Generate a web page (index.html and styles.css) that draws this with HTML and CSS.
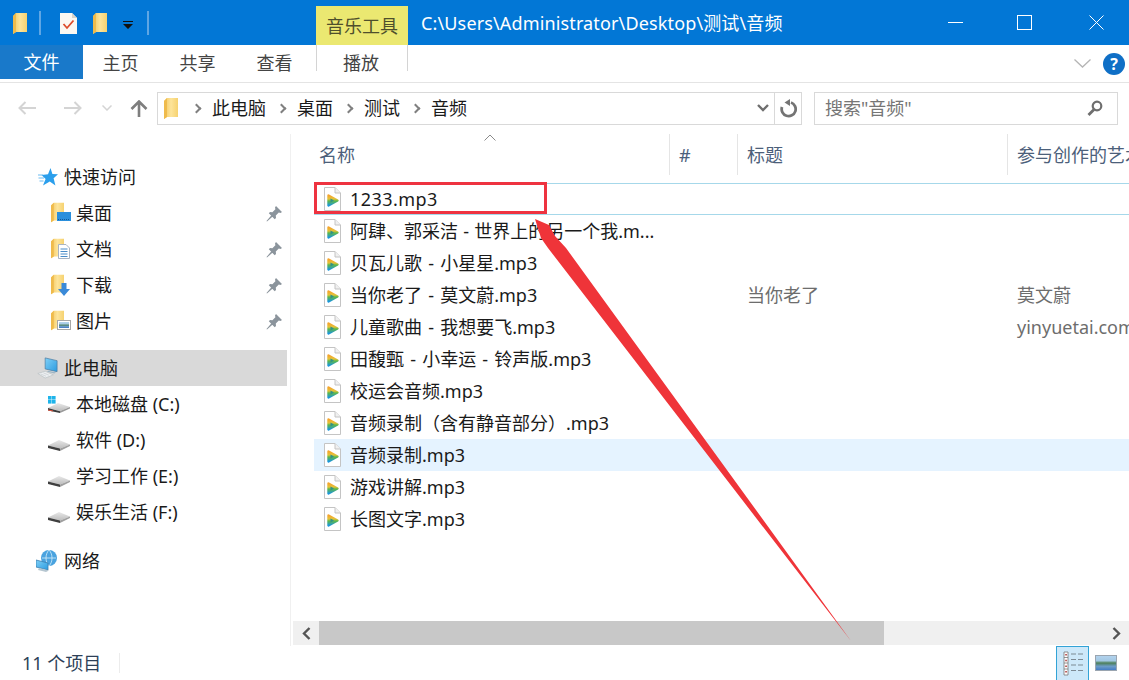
FILE: index.html
```html
<!DOCTYPE html>
<html lang="zh-CN">
<head>
<meta charset="utf-8">
<title>音频</title>
<link rel="stylesheet" href="styles.css">
</head>
<body>
<svg class="sprite" aria-hidden="true">
  <defs>
    <linearGradient id="fold" x1="0" y1="0" x2="1" y2="0"><stop offset="0" stop-color="#f3c65c"/><stop offset=".5" stop-color="#fde49a"/><stop offset="1" stop-color="#f6d270"/></linearGradient>
    <linearGradient id="scr" x1="0" y1="0" x2="1" y2="1"><stop offset="0" stop-color="#7fd0f7"/><stop offset="1" stop-color="#2b9be0"/></linearGradient>
    <linearGradient id="drv" x1="0" y1="0" x2="0" y2="1"><stop offset="0" stop-color="#e8e8e8"/><stop offset="1" stop-color="#bdbdbd"/></linearGradient>
    <linearGradient id="pic" x1="0" y1="0" x2="0" y2="1"><stop offset="0" stop-color="#b4d4ee"/><stop offset=".35" stop-color="#a3c8e4"/><stop offset=".5" stop-color="#4d7f58"/><stop offset=".72" stop-color="#6d9cc8"/><stop offset="1" stop-color="#3f78c4"/></linearGradient>
    <linearGradient id="play" x1="0" y1="0" x2="0" y2="1"><stop offset="0" stop-color="#f5a52c"/><stop offset=".35" stop-color="#e3c23a"/><stop offset=".55" stop-color="#5cb84a"/><stop offset="1" stop-color="#1b96dc"/></linearGradient>
    <symbol id="i-folder" viewBox="0 0 14 21"><path d="M0 3 L0 21 L3 19 L14 19 L14 0 L3 0 Z" fill="url(#fold)"/><path d="M0 3 L3 0 L3 19 L0 21 Z" fill="#efbb4c"/></symbol>
    <symbol id="i-music" viewBox="0 0 19 24"><path d="M1.5 .5 H12 L17.5 6 V23.5 H1.5 Z" fill="#fff" stroke="#c4c4c4"/><path d="M12 .5 V6 H17.5" fill="#f0f0f0" stroke="#c4c4c4"/><path d="M5.5 8.5 L14.5 13.5 L5.5 18.5 Z" fill="url(#play)" stroke="url(#play)" stroke-width="2.4" stroke-linejoin="round"/><path d="M7.5 11.5 L11 13.5 L7.5 15.5 Z" fill="#2f8f8a"/></symbol>
    <symbol id="i-pin" viewBox="0 0 17 17"><path d="M10 1 L16 7 L14.5 8 L12.8 7.6 L9.8 10.6 L10 13 L8.7 14.2 L2.8 8.3 L4 7 L6.4 7.2 L9.4 4.2 L9 2.5 Z M5.2 10.6 L6.4 11.8 L1 16.5 L.5 16 Z" fill="#8b949c"/></symbol>
    <symbol id="i-star" viewBox="0 0 20 18"><path d="M12.5 0 L14.4 6 L20 6.3 L15.6 10.2 L17.4 17.5 L11.8 13.6 L5 17.5 L7.6 11 L3.5 7 L10 6.3 Z" fill="#2b9fec"/><path d="M0 7 H5 M0.5 10 H6 M1.5 13 H5.5" stroke="#6bbcf2" stroke-width="1.2"/></symbol>
    <symbol id="i-pc" viewBox="0 0 24 24"><path d="M10 1 L23 4 V16 L10 13 Z" fill="url(#scr)" stroke="#4d7da3" stroke-width=".8"/><path d="M13 15 L22 17 L20 18 L12 16 Z" fill="#9db4c4"/><path d="M2 18 L10 15.5 L19 19.5 L10 23 Z" fill="#eceff1" stroke="#bcc2c6" stroke-width=".8"/><path d="M5 18.5 L11 21 M8 17.3 L14 19.8" stroke="#c8ced2" stroke-width=".8"/></symbol>
    <symbol id="i-cdrive" viewBox="0 0 24 17"><rect x="1" y="0" width="3.6" height="3.6" fill="#1eb4ea"/><rect x="5" y="0" width="3.6" height="3.6" fill="#1eb4ea"/><rect x="1" y="4" width="3.6" height="3.6" fill="#1eb4ea"/><rect x="5" y="4" width="3.6" height="3.6" fill="#1eb4ea"/><path d="M1 12 L11 7 L23 11 L13 15 Z" fill="url(#drv)"/><path d="M1 12 L13 15.2 L13 17 L1 14.5 Z" fill="#3b3b3b"/><path d="M13 15 L23 11 V12.5 L13 17 Z" fill="#9a9a9a"/><path d="M1 14 L6 15" stroke="#e0533d"/></symbol>
    <symbol id="i-drive" viewBox="0 0 24 13"><path d="M1 7.5 L12 2 L23 6.5 L13 10.5 Z" fill="url(#drv)"/><path d="M1 7.5 L13 10.5 L13 13 L1 10 Z" fill="#3f3f3f"/><path d="M13 10.5 L23 6.5 V8 L13 13 Z" fill="#a0a0a0"/></symbol>
    <symbol id="i-net" viewBox="0 0 22 22"><circle cx="13" cy="8" r="8" fill="#4aa3df"/><path d="M6 8 H20 M13 0 C9 4 9 12 13 16 C17 12 17 4 13 0" stroke="#d6edfa" fill="none" stroke-width=".8"/><path d="M0 10 L12 13 V20 L0 17 Z" fill="url(#scr)" stroke="#3a7fb0" stroke-width=".8"/><path d="M3 18 L13 20.5 L10 22 L2 20 Z" fill="#b6c6d0"/></symbol>
  </defs>
</svg>

<div class="window">
  <header class="titlebar">
    <div class="qat">
      <svg class="qf qf-first"><use href="#i-folder"/></svg>
      <span class="qsep"></span>
      <svg class="qdoc" viewBox="0 0 17 21"><path d="M0 0 H12 L17 5 V21 H0 Z" fill="#fbf8f2"/><path d="M12 0 L17 5 H12 Z" fill="#d8d4ca"/><path d="M3.5 11 L7 15 L13.5 7.5" fill="none" stroke="#dd4b2b" stroke-width="1.8"/></svg>
      <svg class="qf qf-second"><use href="#i-folder"/></svg>
      <svg class="qdrop" viewBox="0 0 10 9"><path d="M0 0 H10 V1 H0 Z M0 3 H10 L5 8 Z" fill="#111"/></svg>
      <span class="qsep qsep-last"></span>
    </div>
    <div class="tooltab">音乐工具</div>
    <div class="wintitle">C:\Users\Administrator\Desktop\测试\音频</div>
    <div class="winctl">
      <svg class="ctl" viewBox="0 0 15 15"><path d="M0 7.5 H15" stroke="#fff"/></svg>
      <svg class="ctl" viewBox="0 0 15 15"><rect x=".5" y=".5" width="14" height="14" fill="none" stroke="#fff"/></svg>
      <svg class="ctl ctl-close" viewBox="0 0 15 15"><path d="M.5 .5 L14.5 14.5 M14.5 .5 L.5 14.5" stroke="#fff"/></svg>
    </div>
  </header>

  <nav class="ribbon">
    <div class="tab-file">文件</div>
    <div class="tab">主页</div>
    <div class="tab">共享</div>
    <div class="tab">查看</div>
    <div class="tab-tool">播放</div>
    <div class="ribbon-right">
      <svg class="rib-chev" viewBox="0 0 17 9"><path d="M.5 .5 L8.5 8 L16.5 .5" fill="none" stroke="#b5b5b5" stroke-width="1.3"/></svg>
      <span class="help">?</span>
    </div>
  </nav>

  <div class="addressbar">
    <svg class="nav-arrow nav-back" viewBox="0 0 18 14"><path d="M18 7 H2 M7.5 1 L1.5 7 L7.5 13" fill="none" stroke="#d4d4d4" stroke-width="2"/></svg>
    <svg class="nav-arrow nav-fwd" viewBox="0 0 18 14"><path d="M0 7 H16 M10.5 1 L16.5 7 L10.5 13" fill="none" stroke="#d4d4d4" stroke-width="2"/></svg>
    <svg class="nav-down" viewBox="0 0 10 6"><path d="M.5 .5 L5 5 L9.5 .5" fill="none" stroke="#d4d4d4" stroke-width="1.5"/></svg>
    <svg class="nav-up" viewBox="0 0 18 17"><path d="M9 17 V2 M1.5 9 L9 1.5 L16.5 9" fill="none" stroke="#7e7e7e" stroke-width="2.6"/></svg>
    <div class="pathbox">
      <svg class="path-folder"><use href="#i-folder"/></svg>
      <span class="crumb-sep"></span><span>此电脑</span>
      <span class="crumb-sep"></span><span>桌面</span>
      <span class="crumb-sep"></span><span>测试</span>
      <span class="crumb-sep"></span><span>音频</span>
      <svg class="path-chev" viewBox="0 0 12 8"><path d="M1 1 L6 6 L11 1" fill="none" stroke="#6e6e6e" stroke-width="2.4"/></svg>
      <span class="path-refresh"><svg viewBox="0 0 18 19"><path d="M12 3.5 A7 7 0 1 1 3 8" fill="none" stroke="#747474" stroke-width="2.8"/><path d="M11 0 L11 7 L5.5 3.5 Z" fill="#747474"/></svg></span>
    </div>
    <div class="searchbox">
      <span>搜索"音频"</span>
      <svg class="search-ico" viewBox="0 0 16 16"><circle cx="10" cy="6" r="4.3" fill="none" stroke="#6e6e6e" stroke-width="2.2"/><path d="M7 9.5 L1.5 15" stroke="#6e6e6e" stroke-width="2.8"/></svg>
    </div>
  </div>

  <main class="content">
    <aside class="sidebar">
      <div class="nrow nrow-top"><svg class="ico-top ico-star"><use href="#i-star"/></svg>快速访问</div>
      <div class="nrow nrow-sub">
        <span class="subfolder"><svg class="sf-base"><use href="#i-folder"/></svg><svg class="sf-over" viewBox="0 0 14 9"><rect width="14" height="9" fill="#2a8fdc"/><path d="M1 7.5 H13" stroke="#0f5a9c" stroke-dasharray="1 1"/></svg></span>桌面<svg class="pin"><use href="#i-pin"/></svg>
      </div>
      <div class="nrow nrow-sub">
        <span class="subfolder"><svg class="sf-base"><use href="#i-folder"/></svg><svg class="sf-over sf-doc" viewBox="0 0 12 15"><path d="M.5 .5 H8 L11.5 4 V14.5 H.5 Z" fill="#fff" stroke="#a9b4c2"/><path d="M2.5 5 H9.5 M2.5 7.5 H9.5 M2.5 10 H9.5 M2.5 12.5 H9.5" stroke="#4a8cc8"/></svg></span>文档<svg class="pin"><use href="#i-pin"/></svg>
      </div>
      <div class="nrow nrow-sub">
        <span class="subfolder"><svg class="sf-base"><use href="#i-folder"/></svg><svg class="sf-over sf-dl" viewBox="0 0 12 13"><path d="M3.5 0 H8.5 V6 H12 L6 13 L0 6 H3.5 Z" fill="#3a8ad8"/></svg></span>下载<svg class="pin"><use href="#i-pin"/></svg>
      </div>
      <div class="nrow nrow-sub">
        <span class="subfolder"><svg class="sf-base"><use href="#i-folder"/></svg><svg class="sf-over sf-pic" viewBox="0 0 14 10"><rect x=".5" y=".5" width="13" height="9" fill="#fff" stroke="#a7a7a7"/><rect x="2" y="2" width="10" height="6" fill="url(#pic)"/></svg></span>图片<svg class="pin"><use href="#i-pin"/></svg>
      </div>

      <div class="nrow nrow-top nrow-pc"><svg class="ico-top ico-pc"><use href="#i-pc"/></svg>此电脑</div>
      <div class="nrow nrow-sub"><svg class="ico-cdrive"><use href="#i-cdrive"/></svg>本地磁盘 (C:)</div>
      <div class="nrow nrow-sub"><svg class="ico-drive"><use href="#i-drive"/></svg>软件 (D:)</div>
      <div class="nrow nrow-sub"><svg class="ico-drive"><use href="#i-drive"/></svg>学习工作 (E:)</div>
      <div class="nrow nrow-sub"><svg class="ico-drive"><use href="#i-drive"/></svg>娱乐生活 (F:)</div>

      <div class="nrow nrow-top nrow-net"><svg class="ico-top ico-net"><use href="#i-net"/></svg>网络</div>
    </aside>

    <section class="pane">
      <div class="listview">
        <div class="colhead">
          <span class="sort-chev"><svg viewBox="0 0 12 7"><path d="M.5 6.5 L6 1 L11.5 6.5" fill="none" stroke="#8a8a8a"/></svg></span>
          <div class="col col-name">名称</div>
          <div class="col">#</div>
          <div class="col">标题</div>
          <div class="col col-last">参与创作的艺术家</div>
        </div>
        <div class="frow frow-focus"><div class="fname fname-latin"><svg class="mico"><use href="#i-music"/></svg>1233.mp3</div></div>
        <div class="frow"><div class="fname fname-long"><svg class="mico"><use href="#i-music"/></svg>阿肆、郭采洁 - 世界上的另一个我.m...</div></div>
        <div class="frow"><div class="fname"><svg class="mico"><use href="#i-music"/></svg>贝瓦儿歌 - 小星星.mp3</div></div>
        <div class="frow"><div class="fname"><svg class="mico"><use href="#i-music"/></svg>当你老了 - 莫文蔚.mp3</div><div></div><div class="fmeta">当你老了</div><div class="fmeta">莫文蔚</div></div>
        <div class="frow"><div class="fname"><svg class="mico"><use href="#i-music"/></svg>儿童歌曲 - 我想要飞.mp3</div><div></div><div></div><div class="fmeta">yinyuetai.com</div></div>
        <div class="frow"><div class="fname"><svg class="mico"><use href="#i-music"/></svg>田馥甄 - 小幸运 - 铃声版.mp3</div></div>
        <div class="frow"><div class="fname"><svg class="mico"><use href="#i-music"/></svg>校运会音频.mp3</div></div>
        <div class="frow"><div class="fname"><svg class="mico"><use href="#i-music"/></svg>音频录制（含有静音部分）.mp3</div></div>
        <div class="frow frow-hover"><div class="fname"><svg class="mico"><use href="#i-music"/></svg>音频录制.mp3</div></div>
        <div class="frow"><div class="fname"><svg class="mico"><use href="#i-music"/></svg>游戏讲解.mp3</div></div>
        <div class="frow"><div class="fname"><svg class="mico"><use href="#i-music"/></svg>长图文字.mp3</div></div>
      </div>
      <div class="hscroll">
        <span class="sbtn"><svg viewBox="0 0 9 13"><path d="M7.5 1 L2 6.5 L7.5 12" fill="none" stroke="#555" stroke-width="2.4"/></svg></span>
        <span class="sthumb"></span>
        <span class="strack"></span>
        <span class="sbtn"><svg viewBox="0 0 9 13"><path d="M1.5 1 L7 6.5 L1.5 12" fill="none" stroke="#555" stroke-width="2.4"/></svg></span>
      </div>
    </section>
  </main>

  <footer class="statusbar">
    <span class="count">11 个项目</span>
    <span class="stsep"></span>
    <span class="viewbtn viewbtn-on"><svg viewBox="0 0 23 25"><path d="M3 1 H7 V24 H3 Z" fill="#fff" stroke="#777" stroke-width=".8"/><path d="M3 6.5 H7 M3 12 H7 M3 18 H7" stroke="#777" stroke-width=".8"/><path d="M4.3 3 h1.5 v1.5 h-1.5 Z M4.3 8.7 h1.5 v1.5 h-1.5 Z M4.3 14.4 h1.5 v1.5 h-1.5 Z M4.3 20 h1.5 v1.5 h-1.5 Z" fill="#a33"/><path d="M10 3 H15 M17 3 H22 M10 8.5 H15 M17 8.5 H22 M10 14 H15 M17 14 H22 M10 19.5 H15 M17 19.5 H22" stroke="#7d8a94" stroke-width="1.2"/></svg></span>
    <span class="viewbtn"><svg viewBox="0 0 22 16"><rect x=".5" y=".5" width="21" height="15" fill="url(#pic)" stroke="#9aa5b0"/></svg></span>
  </footer>

  <div class="redbox"></div>
  <svg class="redarrow" viewBox="0 0 1129 680"><polygon points="535,219 549,225 555,236 566,248 851,641 548,248 541,238" fill="#ef3439"/></svg>
</div>
</body>
</html>
```
FILE: styles.css
```css
* { box-sizing: border-box; }
html, body { margin: 0; height: 100%; overflow: hidden; background: #fff; }
body { font-family: "Noto Sans", "Noto Sans CJK SC", sans-serif; font-size: 18px; color: #1a1a1a; }
.sprite { position: absolute; width: 0; height: 0; }
.window { position: relative; width: 1129px; height: 680px; display: flex; flex-direction: column; overflow: hidden; }

/* title bar */
.titlebar { height: 45px; flex: none; background: #0277d6; display: flex; align-items: flex-start; color: #fff; }
.qat { width: 316px; height: 45px; flex: none; display: flex; align-items: center; padding-left: 13px; }
.qf { width: 14px; height: 21px; }
.qf-first { margin-top: 1px; }
.qf-second { margin-left: 16px; margin-top: 1px; }
.qsep { width: 2px; height: 24px; background: #5fa6e4; margin-left: 12px; }
.qdoc { width: 17px; height: 21px; margin-left: 19px; margin-top: 1px; }
.qdrop { width: 10px; height: 9px; margin-left: 16px; margin-top: 6px; }
.qsep-last { margin-left: 14px; }
.tooltab { width: 92px; height: 39px; margin-top: 6px; background: #ebe871; color: #4f4f2c; display: flex; align-items: center; justify-content: center; font-size: 18px; line-height: 1; }
.wintitle { margin-left: 13px; height: 45px; display: flex; align-items: center; font-size: 18px; letter-spacing: .14px; line-height: 1; white-space: nowrap; }
.winctl { margin-left: auto; display: flex; padding-top: 15px; padding-right: 25px; gap: 54px; }
.ctl { width: 15px; height: 15px; }
.ctl-close { margin-left: 3px; }

/* ribbon */
.ribbon { height: 38px; flex: none; display: flex; align-items: flex-start; border-bottom: 1px solid #e4e4e4; color: #444; }
.tab-file { width: 83px; height: 34px; margin-right: -1px; background: #1979ca; color: #fff; display: flex; align-items: center; justify-content: center; line-height: 1; }
.tab { width: 77px; height: 37px; display: flex; align-items: center; justify-content: center; line-height: 1; padding-bottom: 1px; }
.tab-tool { width: 92px; height: 37px; margin-left: 3px; display: flex; align-items: center; justify-content: center; line-height: 1; padding-bottom: 1px; padding-right: 2px; border-left: 1px solid #dcdcdc; border-right: 1px solid #dcdcdc; border-image: linear-gradient(#d4d4d4 70%, #fff 70%) 1; }
.ribbon-right { margin-left: auto; height: 37px; display: flex; align-items: center; padding-right: 4px; gap: 12px; }
.rib-chev { width: 17px; height: 9px; }
.help { width: 22px; height: 22px; border-radius: 50%; background: #0f6fc6; color: #fff; font-size: 16px; font-weight: 700; line-height: 22px; text-align: center; }

/* address row */
.addressbar { height: 51px; flex: none; display: flex; align-items: center; padding-bottom: 1px; position: relative; }
.nav-arrow { width: 18px; height: 14px; }
.nav-back { margin-left: 18px; }
.nav-fwd { margin-left: 28px; }
.nav-down { width: 10px; height: 6px; margin-left: 20px; }
.nav-up { width: 18px; height: 17px; margin-left: 18px; }
.pathbox { margin-left: 9px; width: 645px; height: 33px; border: 1px solid #d9d9d9; display: flex; align-items: center; line-height: 1; color: #1a1a1a; padding-left: 6px; }
.path-folder { width: 14px; height: 21px; }
.crumb-sep { width: 7px; height: 7px; border-top: 2px solid #808080; border-right: 2px solid #808080; transform: rotate(45deg); margin: 0 12px 0 12px; }
.path-folder + .crumb-sep { margin-left: 15px; }
.path-chev { width: 12px; height: 8px; margin-left: auto; margin-right: 5px; }
.path-refresh { width: 27px; height: 100%; border-left: 1px solid #d9d9d9; display: flex; align-items: center; justify-content: center; }
.path-refresh svg { width: 18px; height: 19px; }
.searchbox { margin-left: 12px; width: 304px; height: 33px; border: 1px solid #d9d9d9; display: flex; align-items: center; justify-content: space-between; padding: 0 14px 0 10px; color: #767676; line-height: 1; }
.search-ico { width: 16px; height: 16px; }

/* main */
.content { flex: 1; min-height: 0; display: flex; }
.sidebar { width: 291px; flex: none; border-right: 1px solid #f0f0f0; padding-top: 25px; }
.nrow { height: 36px; display: flex; align-items: center; line-height: 1; white-space: nowrap; margin-right: 3px; }
.nrow-top { padding-left: 36px; }
.nrow-sub { padding-left: 47px; }
.nrow-pc { margin-top: 11px; background: #d9d9d9; }
.nrow-net { margin-top: 13px; }
.ico-top { flex: none; margin-right: 6px; }
.ico-star { width: 20px; height: 18px; margin-left: 2px; }
.ico-pc { width: 22px; height: 22px; }
.ico-net { width: 22px; height: 22px; }
.subfolder { position: relative; width: 22px; height: 22px; margin-right: 4px; margin-left: 3px; flex: none; display: block; }
.sf-base { width: 13px; height: 21px; display: block; position: absolute; left: 1px; top: 0; }
.sf-over { position: absolute; left: 7px; top: 10px; width: 14px; height: 9px; }
.sf-doc { left: 8px; top: 6px; width: 12px; height: 15px; }
.sf-dl { left: 8px; top: 9px; width: 12px; height: 13px; }
.sf-pic { left: 7px; top: 10px; width: 14px; height: 10px; }
.pin { width: 17px; height: 17px; margin-left: auto; margin-right: 4px; }
.ico-cdrive { width: 24px; height: 17px; margin-right: 5px; flex: none; }
.ico-drive { width: 24px; height: 13px; margin-right: 5px; margin-top: 8px; flex: none; }

/* file list */
.pane { flex: 1; min-width: 0; display: flex; flex-direction: column; padding-bottom: 1px; }
.listview { flex: 1; min-height: 0; overflow: hidden; position: relative; }
.colhead, .frow { display: grid; grid-template-columns: 355px 68px 270px 200px; margin-left: 23px; }
.colhead { height: 49px; padding-bottom: 8px; color: #4c607a; align-items: stretch; }
.sort-chev { position: absolute; left: 193px; top: 0; width: 12px; height: 7px; display: block; line-height: 0; }
.col { display: flex; align-items: center; padding-left: 9px; line-height: 1; white-space: nowrap; overflow: hidden; border-left: 1px solid #e5e5e5; }
.col-name { padding-left: 5px; border-left: 0; }
.frow { height: 32px; align-items: center; line-height: 1; white-space: nowrap; }
.fname { display: flex; align-items: center; padding-left: 9px; word-spacing: 1.5px; }
.fname-latin { letter-spacing: .45px; }
.fname-long { word-spacing: .5px; }
.mico { width: 19px; height: 24px; margin-right: 8px; flex: none; }
.fmeta { padding-left: 10px; color: #6d6d6d; }
.frow-focus { border-top: 1px solid #a6d8ea; border-bottom: 1px solid #a6d8ea; }
.frow-hover { background: #e5f3ff; }

.hscroll { height: 24px; flex: none; margin-left: 2px; display: flex; background: #f0f0f0; }
.sbtn { width: 26px; height: 100%; display: flex; align-items: center; justify-content: center; }
.sbtn svg { width: 9px; height: 13px; }
.sthumb { width: 565px; background: #c8c8c8; }
.strack { flex: 1; }

/* status */
.statusbar { height: 34px; flex: none; display: flex; align-items: center; padding-left: 22px; color: #2d3f57; line-height: 1; }
.count { white-space: nowrap; width: 97px; }
.stsep { width: 1px; height: 20px; background: #ececec; }
.viewbtn { width: 33px; height: 34px; display: flex; align-items: center; justify-content: center; }
.viewbtn-on { margin-left: auto; background: #cde8f9; border: 1px solid #33a3d6; border-bottom: 0; }
.viewbtn-on svg { width: 23px; height: 25px; }
.viewbtn:last-child { width: 22px; margin-left: 6px; margin-right: 12px; }
.viewbtn:last-child svg { width: 22px; height: 16px; }

/* annotations */
.redbox { position: absolute; left: 314px; top: 182px; width: 233px; height: 32px; border: 3px solid #ee3340; }
.redarrow { position: absolute; left: 0; top: 0; width: 1129px; height: 680px; pointer-events: none; }
```
